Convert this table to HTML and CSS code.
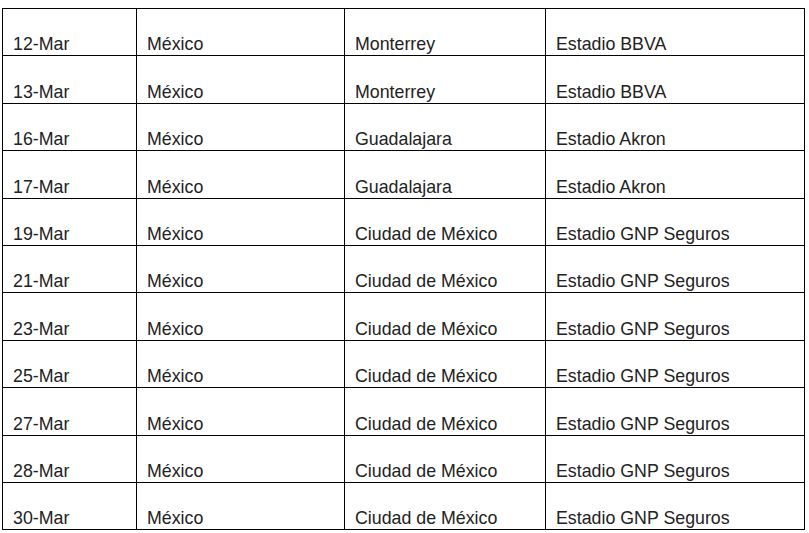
FILE: index.html
```html
<!DOCTYPE html>
<html lang="es">
<head>
<meta charset="utf-8">
<link rel="stylesheet" href="styles.css">
</head>
<body>
<table class="tour">
<colgroup><col class="c1"><col class="c2"><col class="c3"><col class="c4"></colgroup>
<tbody>
<tr><td>12-Mar</td><td>México</td><td>Monterrey</td><td>Estadio BBVA</td></tr>
<tr><td>13-Mar</td><td>México</td><td>Monterrey</td><td>Estadio BBVA</td></tr>
<tr><td>16-Mar</td><td>México</td><td>Guadalajara</td><td>Estadio Akron</td></tr>
<tr><td>17-Mar</td><td>México</td><td>Guadalajara</td><td>Estadio Akron</td></tr>
<tr><td>19-Mar</td><td>México</td><td>Ciudad de México</td><td>Estadio GNP Seguros</td></tr>
<tr><td>21-Mar</td><td>México</td><td>Ciudad de México</td><td>Estadio GNP Seguros</td></tr>
<tr><td>23-Mar</td><td>México</td><td>Ciudad de México</td><td>Estadio GNP Seguros</td></tr>
<tr><td>25-Mar</td><td>México</td><td>Ciudad de México</td><td>Estadio GNP Seguros</td></tr>
<tr><td>27-Mar</td><td>México</td><td>Ciudad de México</td><td>Estadio GNP Seguros</td></tr>
<tr><td>28-Mar</td><td>México</td><td>Ciudad de México</td><td>Estadio GNP Seguros</td></tr>
<tr><td>30-Mar</td><td>México</td><td>Ciudad de México</td><td>Estadio GNP Seguros</td></tr>
</tbody>
</table>
</body>
</html>
```
FILE: styles.css
```css
html, body {
  margin: 0;
  padding: 0;
  background: #fff;
}
body {
  font-family: "Liberation Sans", Arial, sans-serif;
  font-size: 17.8px;
  color: #222;
}
.tour {
  margin: 8px 0 0 2px;
  border-collapse: collapse;
  table-layout: fixed;
  width: 802px;
}
.c1 { width: 134px; }
.c2 { width: 208px; }
.c3 { width: 201px; }
.c4 { width: 259px; }
.tour td {
  border: 1px solid #000;
  height: 47.4px;
  box-sizing: border-box;
  padding: 0 10px 1px 10px;
  vertical-align: bottom;
  line-height: 20px;
  white-space: nowrap;
}
```
